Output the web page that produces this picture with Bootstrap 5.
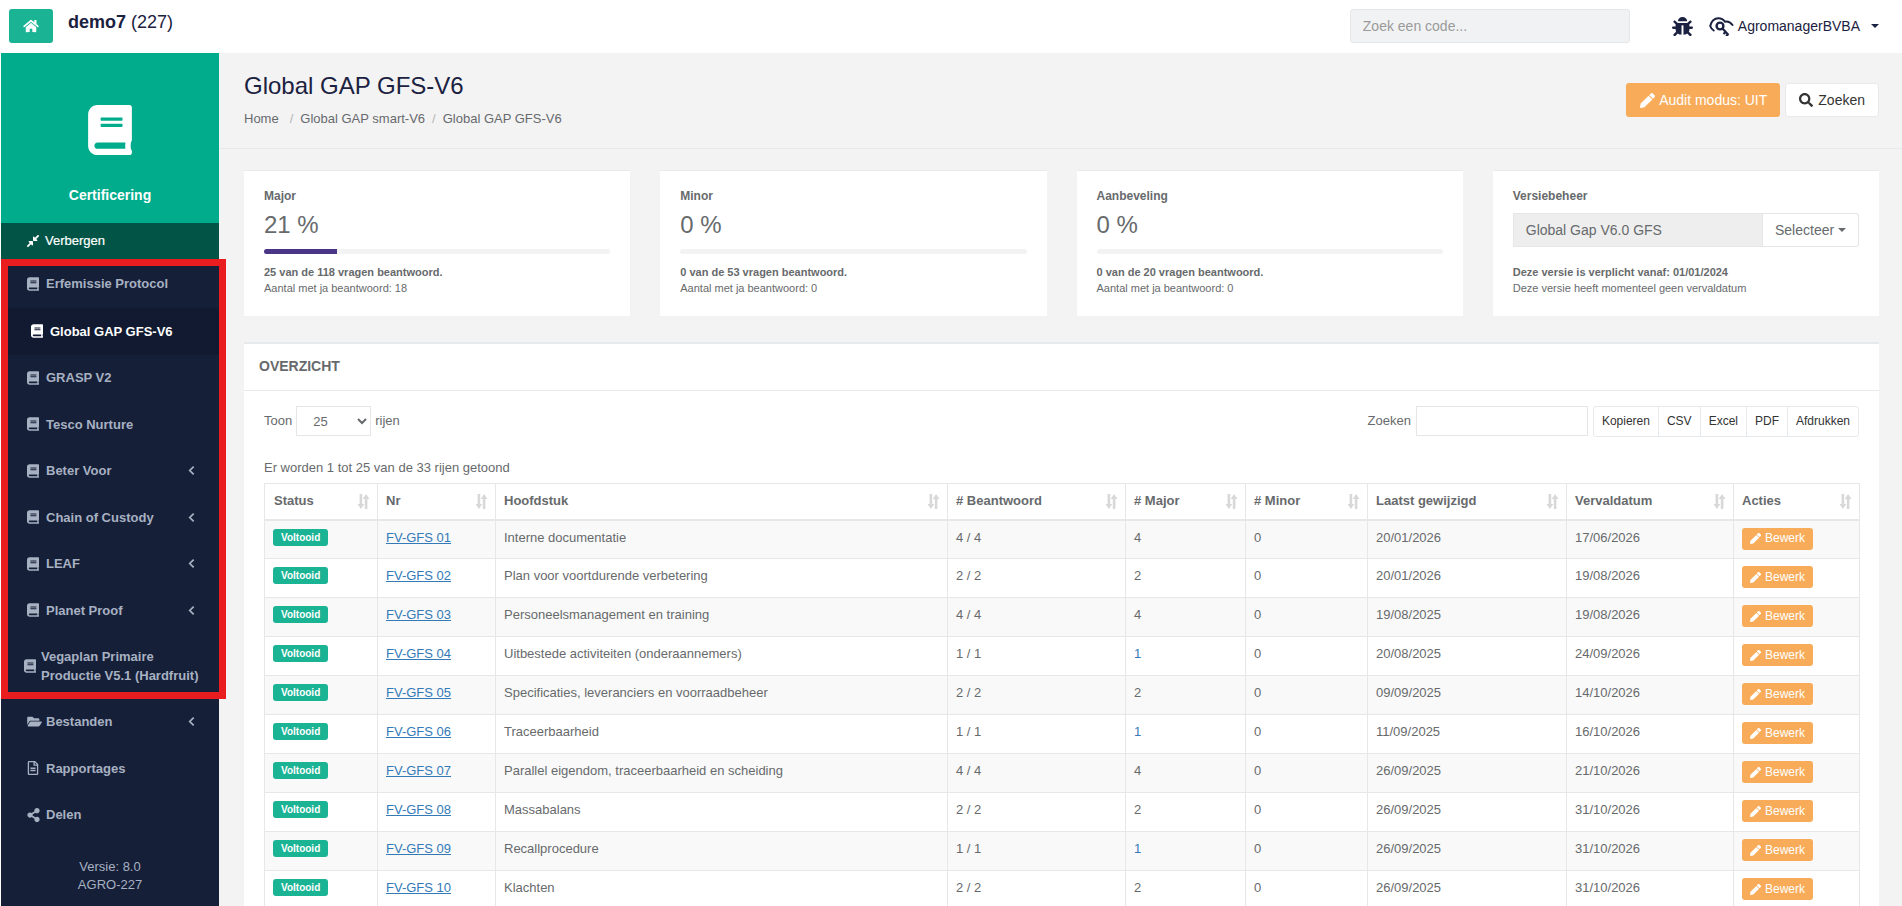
<!DOCTYPE html>
<html lang="nl">
<head>
    <meta charset="UTF-8">
    <title>Global GAP GFS-V6</title>
    <link href="https://cdn.jsdelivr.net/npm/bootstrap@5.3.3/dist/css/bootstrap.min.css" rel="stylesheet">
    <style>
        html, body { height: 906px; overflow: hidden; }
        body { font-family: "Liberation Sans", Arial, sans-serif; font-size: 13px; color: #676a6c; background: #fff; }
        svg { fill: currentColor; display: block; flex-shrink: 0; }

        .topbalk { height: 53px; padding: 9px 23px 0 9px; }
        .home-knop { width: 44px; height: 34px; background: #1ab394; color: #fff; border-radius: 3px; }
        .bedrijf { font-size: 18px; color: #1b2140; margin: 0 0 0 15px; line-height: 26px; }
        .code-zoek { width: 280px; height: 34px; background: #f1f2f3; border: 1px solid #e5e6e7; border-radius: 3px; font-size: 14px; padding: 0 12px; margin-right: 42px; color: #676a6c; }
        .code-zoek::placeholder { color: #9a9a9a; }
        .gebruiker { color: #1b2140; font-size: 14px; height: 34px; }
        .gebruiker .klein-pijl { margin-left: 11px; }

        .hoofd { height: 853px; }
        .zijbalk { width: 218px; margin-left: 1px; background: #161f38; position: relative; flex-shrink: 0; }
        .zij-kop { height: 170px; background: #00ac8c; color: #fff; padding-top: 52px; }
        .zij-kop b { font-size: 14px; margin-top: 32px; line-height: 16px; }
        .verberg { height: 36px; background: #025546; color: #fff; padding-left: 25px; gap: 5px; font-size: 13px; -webkit-text-stroke: .2px #fff; }
        .menu-item { height: 46.5px; padding-left: 26px; padding-right: 24px; font-size: 13px; font-weight: 700; color: #a7b1c2; gap: 7px; text-decoration: none; }
        .menu-item.eerste { height: 49px; }
        .menu-item.actief { background: #111a30; color: #fff; padding-left: 30px; }
        .menu-item.dubbel { height: 65px; padding-left: 23px; gap: 5px; line-height: 19px; padding-right: 10px; }
        .menu-item .pijl { margin-left: auto; }
        .bestanden-tekst { margin-left: -3px; }
        .delen-tekst { margin-left: -1px; }
        .versie { color: #a7b1c2; font-size: 13px; line-height: 18px; padding-top: 20px; }
        .rood-kader { position: absolute; left: 0; top: 206px; width: 225px; height: 440px; border: 7px solid #e91c1f; pointer-events: none; }

        .inhoud { background: #f3f3f4; min-width: 0; }
        .kop-regel { height: 96px; border-bottom: 1px solid #e7eaec; padding: 0 23px 0 25px; }
        .kop-regel h2 { font-size: 24px; font-weight: 400; color: #1b2140; margin: 18px 0 0; line-height: 30px; }
        .pad { font-size: 13px; margin-top: 8px; line-height: 20px; color: #676a6c; gap: 7px; }
        .pad span:first-child { margin-right: 4px; }
        .pad i { font-style: normal; color: #b5b5b5; }
        .audit-knop { background: #f8ac59; color: #fff; border-radius: 3px; height: 34px; padding: 0 13px 0 14px; font-size: 14px; gap: 4px; margin-top: 30px; }
        .zoek-knop { background: #fff; border: 1px solid #e7eaec; color: #333; border-radius: 3px; height: 34px; padding: 0 13px; font-size: 14px; gap: 5px; margin: 30px 0 0 5px; }

        .wit-vlak { padding: 21px 23px 0 25px; }
        .stat-rij { --bs-gutter-x: 30px; }
        .stat { background: #fff; border-top: 1px solid #e7eaec; height: 146px; padding: 14px 20px 0; font-size: 11px; line-height: 16px; }
        .stat h5 { font-size: 12px; font-weight: 700; margin: 3px 0 0; color: #676a6c; line-height: 16px; }
        .stat-getal { font-size: 24px; line-height: 30px; margin-top: 6px; }
        .balk { height: 5px; background: #f3f3f4; border-radius: 3px; margin: 9px 0 10px; overflow: hidden; }
        .balk div { height: 5px; background: #4a3586; }
        .versie-groep { height: 34px; margin: 9px 0 17px; font-size: 14px; }
        .versie-naam { background: #eee; border: 1px solid #e5e6e7; padding-left: 12px; color: #676a6c; }
        .versie-knop { width: 96px; border: 1px solid #e5e6e7; border-left: 0; gap: 4px; padding-left: 12px; border-radius: 0 3px 3px 0; color: #676a6c; }
        .klein-pijl { width: 0; height: 0; border-left: 4px solid transparent; border-right: 4px solid transparent; border-top: 4px solid currentColor; }

        .overzicht { background: #fff; border-top: 2px solid #e7eaec; margin-top: 26px; }
        .overzicht-kop { height: 47px; border-bottom: 1px solid #e7eaec; padding: 0 0 2px 15px; font-size: 14px; font-weight: 700; line-height: 1; }
        .overzicht-body { padding: 15px 20px 0; font-size: 13px; }
        .regelaar { height: 30px; }
        .toon-lijst { width: 75px; height: 30px; border: 1px solid #e5e6e7; color: #676a6c; background: #fff; font-size: 13px; padding: 0 0 0 12px; margin: 0 4px 0 4px; }
        .zoek-veld { width: 172px; height: 30px; border: 1px solid #e5e6e7; margin: 0 5px 0 5px; }
        .export { border: 1px solid #e7eaec; border-radius: 3px; height: 31px; font-size: 12px; color: #333; }
        .export span { padding: 0 8px; line-height: 29px; border-left: 1px solid #e7eaec; }
        .export span:first-child { border-left: 0; }
        .info-regel { margin: 22px 0 5px; line-height: 20px; font-size: 13px; }

        .lijst { table-layout: fixed; width: 1595px; border-collapse: collapse; font-size: 13px; color: #676a6c; }
        .lijst th, .lijst td { border: 1px solid #e7e7e7; padding: 8px; vertical-align: top; line-height: 17px; height: 39px; }
        .lijst thead th { border-bottom-width: 2px; height: 36px; position: relative; font-weight: 700; }
        .lijst thead th:first-child { padding-left: 9px; }
        .lijst tbody tr:nth-child(odd) td { background: #f9f9f9; }
        .lijst a { color: #337ab7; }
        .lijst .sorteer { position: absolute; right: 7px; top: 10px; color: #d8d8d8; }
        .voltooid { display: inline-block; background: #1ab394; color: #fff; font-size: 10px; font-weight: 700; border-radius: 3px; padding: 0 8px; height: 17px; line-height: 17px; vertical-align: top; }
        .bewerk { background: #f8ac59; color: #fff; border-radius: 3px; height: 22px; width: 71px; margin: -1px 0; font-size: 12px; gap: 4px; justify-content: center; }
    </style>
</head>
<body>
    <svg width="0" height="0" class="position-absolute">
        <defs>
            <symbol id="i-boek" viewBox="0 0 448 512"><path d="M448 360V24c0-13.3-10.7-24-24-24H96C43 0 0 43 0 96v320c0 53 43 96 96 96h328c13.3 0 24-10.7 24-24v-16c0-7.5-3.5-14.3-8.9-18.7-4.2-15.4-4.2-59.3 0-74.7 5.4-4.3 8.9-11.1 8.9-18.6zM128 134c0-3.3 2.7-6 6-6h212c3.3 0 6 2.7 6 6v20c0 3.3-2.7 6-6 6H134c-3.3 0-6-2.7-6-6v-20zm0 64c0-3.3 2.7-6 6-6h212c3.3 0 6 2.7 6 6v20c0 3.3-2.7 6-6 6H134c-3.3 0-6-2.7-6-6v-20zm253.4 250H96c-17.7 0-32-14.3-32-32 0-17.6 14.4-32 32-32h285.4c-1.9 17.1-1.9 46.9 0 64z"/></symbol>
            <symbol id="i-potlood" viewBox="0 0 512 512"><path d="M497.9 142.1l-46.1 46.1c-4.7 4.7-12.3 4.7-17 0l-111-111c-4.7-4.7-4.7-12.3 0-17l46.1-46.1c18.7-18.7 49.1-18.7 67.9 0l60.1 60.1c18.8 18.7 18.8 49.1 0 67.9zM284.2 99.8L21.6 362.4.4 483.9c-2.9 16.4 11.4 30.6 27.8 27.8l121.5-21.3 262.6-262.6c4.7-4.7 4.7-12.3 0-17l-111-111c-4.8-4.7-12.4-4.7-17.1 0z"/></symbol>
            <symbol id="i-pijl" viewBox="0 0 8 12"><path d="M6.5 1.5 2 6l4.5 4.5" fill="none" stroke="currentColor" stroke-width="2"/></symbol>
            <symbol id="i-sort" viewBox="0 0 13 15"><path d="M2.6 0h2.600v10H7.300L3.900 15 .5 10h2.100zM7.800 15V5H5.700L9.100 0l3.400 5h-2.100v10z"/></symbol>
        </defs>
    </svg>

    <div class="topbalk d-flex align-items-start">
        <div class="home-knop d-flex align-items-center justify-content-center">
            <svg width="16" height="14" viewBox="0 0 576 512"><path d="M280.37 148.26L96 300.11V464a16 16 0 0 0 16 16l112.06-.29a16 16 0 0 0 15.92-16V368a16 16 0 0 1 16-16h64a16 16 0 0 1 16 16v95.64a16 16 0 0 0 16 16.05L464 480a16 16 0 0 0 16-16V300L295.67 148.26a12.19 12.19 0 0 0-15.3 0zM571.6 251.47L488 182.56V44.05a12 12 0 0 0-12-12h-56a12 12 0 0 0-12 12v72.61L318.47 43a48 48 0 0 0-61 0L4.34 251.47a12 12 0 0 0-1.6 16.9l25.5 31A12 12 0 0 0 45.15 301l235.22-193.74a12.19 12.19 0 0 1 15.3 0L530.9 301a12 12 0 0 0 16.9-1.6l25.5-31a12 12 0 0 0-1.7-16.93z"/></svg>
        </div>
        <div class="bedrijf"><b>demo7</b> (227)</div>
        <input class="code-zoek ms-auto" type="text" placeholder="Zoek een code...">
        <div class="gebruiker d-flex align-items-center">
            <svg width="21" height="19" viewBox="0 0 512 512" preserveAspectRatio="none"><path d="M511.988 288.9c-.478 17.43-15.217 31.1-32.653 31.1H424v16c0 21.864-4.882 42.584-13.6 61.145l60.228 60.228c12.496 12.497 12.496 32.758 0 45.255-12.498 12.497-32.759 12.496-45.256 0l-54.736-54.736C345.886 467.965 314.351 480 280 480V236c0-6.627-5.373-12-12-12h-24c-6.627 0-12 5.373-12 12v244c-34.351 0-65.886-12.035-90.636-32.108l-54.736 54.736c-12.498 12.497-32.759 12.496-45.256 0-12.496-12.497-12.496-32.758 0-45.255l60.228-60.228C92.882 378.584 88 357.864 88 336v-16H32.666C15.23 320 .491 306.33.013 288.9-.484 270.816 14.028 256 32 256h56v-58.745l-46.628-46.628c-12.496-12.497-12.496-32.758 0-45.255 12.498-12.497 32.758-12.497 45.256 0L141.255 160h229.489l54.627-54.627c12.498-12.497 32.758-12.497 45.256 0 12.496 12.497 12.496 32.758 0 45.255L424 197.255V256h56c17.972 0 32.484 14.816 31.988 32.9zM257 0c-61.856 0-112 50.144-112 112h224C369 50.144 318.856 0 257 0z"/></svg>
            <svg class="ms-3" width="25" height="19" viewBox="0 0 25 19"><path d="M4.700 13.500C3 12.500 1.900 11 1.200 9 2.500 3.500 6 1.200 9.500 1.200c3 0 5 1.300 6.500 3.500 2-.5 5 0 7.500 3.300" fill="none" stroke="currentColor" stroke-width="2" stroke-linecap="round"/><circle cx="11" cy="9" r="3.400" fill="none" stroke="currentColor" stroke-width="2.400"/><path d="M13.500 11.500l6 6.500M16.500 15l-2 2M19 17.500l-2 1.500" fill="none" stroke="currentColor" stroke-width="2.200"/></svg>
            <span class="ms-1">AgromanagerBVBA</span>
            <span class="klein-pijl"></span>
        </div>
    </div>

    <div class="hoofd d-flex">
        <nav class="zijbalk">
            <div class="zij-kop d-flex flex-column align-items-center">
                <svg width="44" height="50"><use href="#i-boek"/></svg>
                <b>Certificering</b>
            </div>
            <div class="verberg d-flex align-items-center">
                <svg width="14" height="14" viewBox="0 0 448 512"><path d="M4.686 427.314L104 328l-32.922-31.029C55.958 281.851 66.666 256 88.048 256h112C213.303 256 224 266.745 224 280v112c0 21.382-25.803 32.09-40.922 16.971L152 376l-99.314 99.314c-6.248 6.248-16.379 6.248-22.627 0L4.686 449.941c-6.248-6.248-6.248-16.379 0-22.627zM443.314 84.686L344 184l32.922 31.029c15.12 15.12 4.412 40.971-16.97 40.971h-112C234.697 256 224 245.255 224 232V120c0-21.382 25.803-32.09 40.922-16.971L296 136l99.314-99.314c6.248-6.248 16.379-6.248 22.627 0l25.373 25.373c6.248 6.248 6.248 16.379 0 22.627z"/></svg>
                <span>Verbergen</span>
            </div>
            <a class="menu-item eerste d-flex align-items-center"><svg width="12" height="14"><use href="#i-boek"/></svg>Erfemissie Protocol</a>
            <a class="menu-item actief d-flex align-items-center"><svg width="12" height="14"><use href="#i-boek"/></svg>Global GAP GFS-V6</a>
            <a class="menu-item d-flex align-items-center"><svg width="12" height="14"><use href="#i-boek"/></svg>GRASP V2</a>
            <a class="menu-item d-flex align-items-center"><svg width="12" height="14"><use href="#i-boek"/></svg>Tesco Nurture</a>
            <a class="menu-item d-flex align-items-center"><svg width="12" height="14"><use href="#i-boek"/></svg>Beter Voor<svg class="pijl" width="7" height="11"><use href="#i-pijl"/></svg></a>
            <a class="menu-item d-flex align-items-center"><svg width="12" height="14"><use href="#i-boek"/></svg>Chain of Custody<svg class="pijl" width="7" height="11"><use href="#i-pijl"/></svg></a>
            <a class="menu-item d-flex align-items-center"><svg width="12" height="14"><use href="#i-boek"/></svg>LEAF<svg class="pijl" width="7" height="11"><use href="#i-pijl"/></svg></a>
            <a class="menu-item d-flex align-items-center"><svg width="12" height="14"><use href="#i-boek"/></svg>Planet Proof<svg class="pijl" width="7" height="11"><use href="#i-pijl"/></svg></a>
            <a class="menu-item dubbel d-flex align-items-center"><svg width="12" height="14"><use href="#i-boek"/></svg><span>Vegaplan Primaire Productie V5.1 (Hardfruit)</span></a>
            <a class="menu-item d-flex align-items-center"><svg width="15" height="13" viewBox="0 0 576 512"><path d="M572.694 292.093L500.27 416.248A63.997 63.997 0 0 1 444.989 448H45.025c-18.523 0-30.064-20.093-20.731-36.093l72.424-124.155A64 64 0 0 1 152 256h399.964c18.523 0 30.064 20.093 20.73 36.093zM152 224h328v-48c0-26.51-21.49-48-48-48H272l-64-64H48C21.49 64 0 85.49 0 112v278.046l69.077-118.418C86.214 242.25 117.989 224 152 224z"/></svg><span class="bestanden-tekst">Bestanden</span><svg class="pijl" width="7" height="11"><use href="#i-pijl"/></svg></a>
            <a class="menu-item d-flex align-items-center"><svg width="12" height="14" viewBox="0 0 384 512"><path d="M288 248v28c0 6.6-5.4 12-12 12H108c-6.6 0-12-5.4-12-12v-28c0-6.6 5.4-12 12-12h168c6.6 0 12 5.400 12 12zm-12 72H108c-6.600 0-12 5.400-12 12v28c0 6.600 5.400 12 12 12h168c6.600 0 12-5.400 12-12v-28c0-6.600-5.400-12-12-12zm108-188.100V464c0 26.500-21.500 48-48 48H48c-26.500 0-48-21.500-48-48V48C0 21.500 21.500 0 48 0h204.100C264.800 0 277 5.100 286 14.100L369.900 98c9 8.900 14.100 21.200 14.100 33.900zm-128-80V128h76.100L256 51.900zM336 464V176H232c-13.300 0-24-10.700-24-24V48H48v416h288z"/></svg>Rapportages</a>
            <a class="menu-item d-flex align-items-center"><svg width="13" height="14" viewBox="0 0 448 512"><path d="M352 320c-22.608 0-43.387 7.819-59.790 20.895l-102.486-64.054a96.551 96.551 0 0 0 0-41.683l102.486-64.054C308.613 184.181 329.392 192 352 192c53.019 0 96-42.981 96-96S405.019 0 352 0s-96 42.981-96 96c0 7.158.79 14.130 2.276 20.841L155.790 180.895C139.387 167.819 118.608 160 96 160c-53.019 0-96 42.981-96 96s42.981 96 96 96c22.608 0 43.387-7.819 59.790-20.895l102.486 64.054A96.301 96.301 0 0 0 256 416c0 53.019 42.981 96 96 96s96-42.981 96-96-42.981-96-96-96z"/></svg><span class="delen-tekst">Delen</span></a>
            <div class="versie text-center">Versie: 8.0<br>AGRO-227</div>
            <div class="rood-kader"></div>
        </nav>

        <main class="inhoud flex-grow-1">
            <div class="kop-regel d-flex justify-content-between align-items-start">
                <div>
                    <h2>Global GAP GFS-V6</h2>
                    <div class="pad d-flex"><span>Home</span><i>/</i><span>Global GAP smart-V6</span><i>/</i><span>Global GAP GFS-V6</span></div>
                </div>
                <div class="d-flex">
                    <div class="audit-knop d-flex align-items-center"><svg width="15" height="15"><use href="#i-potlood"/></svg>Audit modus: UIT</div>
                    <div class="zoek-knop d-flex align-items-center"><svg width="14" height="14" viewBox="0 0 512 512"><path d="M505 442.700L405.300 343c-4.500-4.500-10.600-7-17-7H372c27.600-35.300 44-79.700 44-128C416 93.100 322.900 0 208 0S0 93.100 0 208s93.100 208 208 208c48.300 0 92.700-16.400 128-44v16.300c0 6.400 2.500 12.500 7 17l99.700 99.700c9.400 9.400 24.600 9.400 33.900 0l28.300-28.300c9.400-9.400 9.400-24.600.1-34zM208 336c-70.700 0-128-57.200-128-128 0-70.700 57.200-128 128-128 70.700 0 128 57.200 128 128 0 70.700-57.200 128-128 128z"/></svg>Zoeken</div>
                </div>
            </div>

            <div class="wit-vlak">
                <div class="row stat-rij">
                    <div class="col-3"><div class="stat">
                        <h5>Major</h5>
                        <div class="stat-getal">21 %</div>
                        <div class="balk"><div style="width:21%"></div></div>
                        <b>25 van de 118 vragen beantwoord.</b><br><span>Aantal met ja beantwoord: 18</span>
                    </div></div>
                    <div class="col-3"><div class="stat">
                        <h5>Minor</h5>
                        <div class="stat-getal">0 %</div>
                        <div class="balk"><div style="width:0%"></div></div>
                        <b>0 van de 53 vragen beantwoord.</b><br><span>Aantal met ja beantwoord: 0</span>
                    </div></div>
                    <div class="col-3"><div class="stat">
                        <h5>Aanbeveling</h5>
                        <div class="stat-getal">0 %</div>
                        <div class="balk"><div style="width:0%"></div></div>
                        <b>0 van de 20 vragen beantwoord.</b><br><span>Aantal met ja beantwoord: 0</span>
                    </div></div>
                    <div class="col-3"><div class="stat">
                        <h5>Versiebeheer</h5>
                        <div class="versie-groep d-flex">
                            <div class="versie-naam flex-grow-1 d-flex align-items-center">Global Gap V6.0 GFS</div>
                            <div class="versie-knop d-flex align-items-center">Selecteer<span class="klein-pijl"></span></div>
                        </div>
                        <b>Deze versie is verplicht vanaf: 01/01/2024</b><br><span>Deze versie heeft momenteel geen vervaldatum</span>
                    </div></div>
                </div>

                <section class="overzicht">
                    <div class="overzicht-kop d-flex align-items-center">OVERZICHT</div>
                    <div class="overzicht-body">
                        <div class="regelaar d-flex align-items-center">
                            <span>Toon</span>
                            <select class="toon-lijst"><option>25</option></select>
                            <span>rijen</span>
                            <span class="ms-auto">Zoeken</span>
                            <input class="zoek-veld" type="text">
                            <div class="export d-flex">
                                <span>Kopieren</span><span>CSV</span><span>Excel</span><span>PDF</span><span>Afdrukken</span>
                            </div>
                        </div>
                        <div class="info-regel">Er worden 1 tot 25 van de 33 rijen getoond</div>
                        <table class="lijst" id="tabel">
                            <colgroup id="kolommen"></colgroup>
                            <thead><tr id="koprij"></tr></thead>
                            <tbody id="rijen"></tbody>
                        </table>
                    </div>
                </section>
            </div>
        </main>
    </div>

    <script>
        const breedtes = [113, 118, 452, 178, 120, 122, 199, 167, 126];
        const koppen = ['Status', 'Nr', 'Hoofdstuk', '# Beantwoord', '# Major', '# Minor', 'Laatst gewijzigd', 'Vervaldatum', 'Acties'];
        const data = [
            ['Interne documentatie', '4 / 4', 4, '20/01/2026', '17/06/2026'],
            ['Plan voor voortdurende verbetering', '2 / 2', 2, '20/01/2026', '19/08/2026'],
            ['Personeelsmanagement en training', '4 / 4', 4, '19/08/2025', '19/08/2026'],
            ['Uitbestede activiteiten (onderaannemers)', '1 / 1', 1, '20/08/2025', '24/09/2026'],
            ['Specificaties, leveranciers en voorraadbeheer', '2 / 2', 2, '09/09/2025', '14/10/2026'],
            ['Traceerbaarheid', '1 / 1', 1, '11/09/2025', '16/10/2026'],
            ['Parallel eigendom, traceerbaarheid en scheiding', '4 / 4', 4, '26/09/2025', '21/10/2026'],
            ['Massabalans', '2 / 2', 2, '26/09/2025', '31/10/2026'],
            ['Recallprocedure', '1 / 1', 1, '26/09/2025', '31/10/2026'],
            ['Klachten', '2 / 2', 2, '26/09/2025', '31/10/2026']
        ];
        document.getElementById('kolommen').innerHTML = breedtes.map(b => `<col width="${b}">`).join('');
        document.getElementById('koprij').innerHTML = koppen.map(k => `<th>${k}<svg class="sorteer" width="13" height="15"><use href="#i-sort"/></svg></th>`).join('');
        document.getElementById('rijen').innerHTML = data.map((r, i) => {
            const nr = String(i + 1).padStart(2, '0');
            return `<tr>
                <td><span class="voltooid">Voltooid</span></td>
                <td><a href="#">FV-GFS ${nr}</a></td>
                <td>${r[0]}</td>
                <td>${r[1]}</td>
                <td>${r[2] === 1 ? '<a href="#" class="text-decoration-none">1</a>' : r[2]}</td>
                <td>0</td>
                <td>${r[3]}</td>
                <td>${r[4]}</td>
                <td><div class="bewerk d-flex align-items-center"><svg width="11" height="11"><use href="#i-potlood"/></svg>Bewerk</div></td>
            </tr>`;
        }).join('');
    </script>
    <script src="https://cdn.jsdelivr.net/npm/bootstrap@5.3.3/dist/js/bootstrap.bundle.min.js"></script>
</body>
</html>
